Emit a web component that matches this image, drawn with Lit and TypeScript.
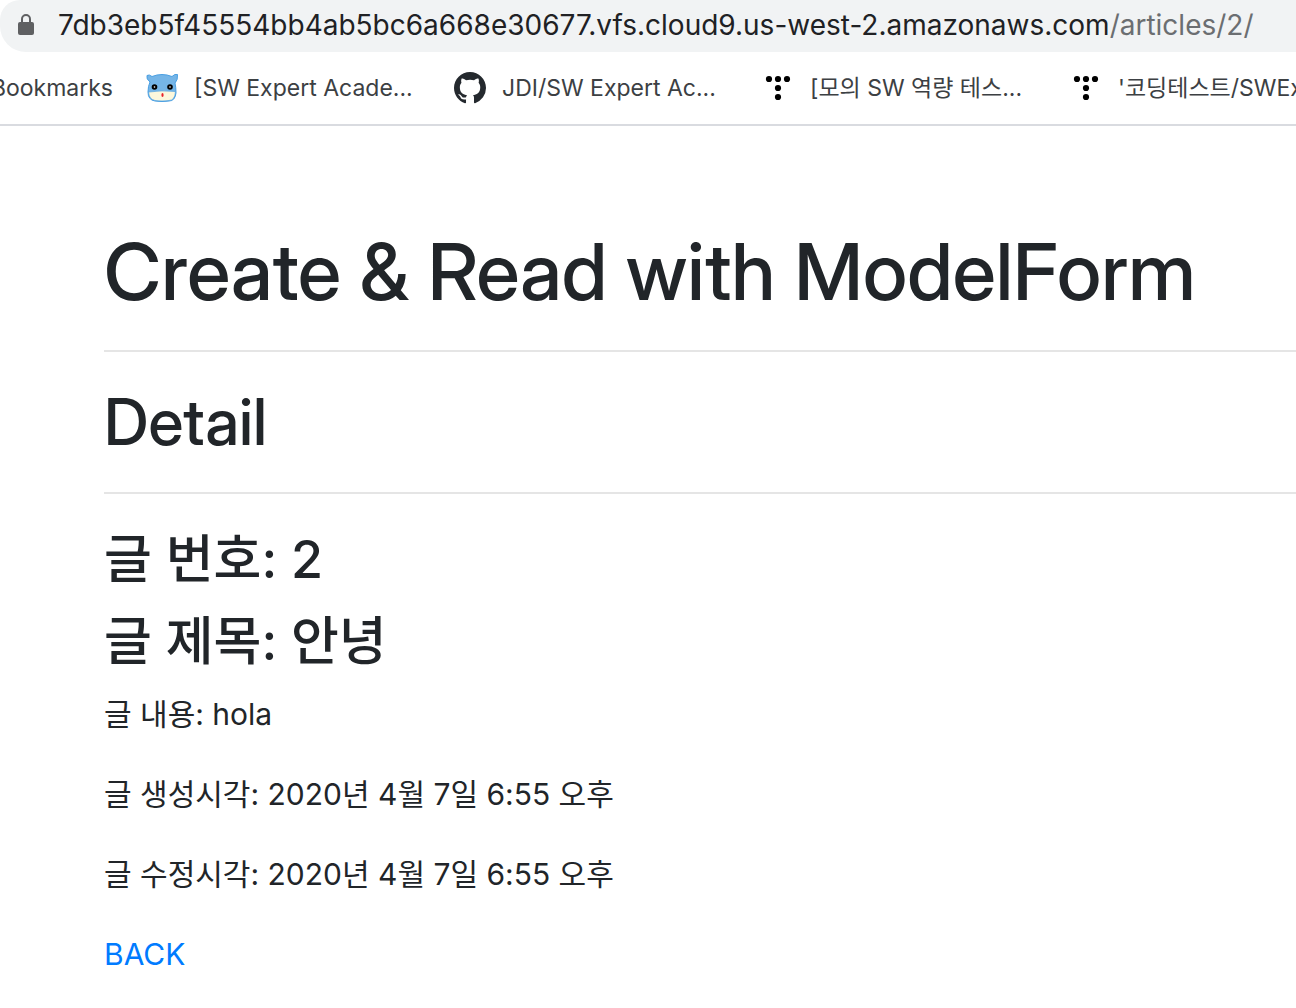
import { LitElement, html, css, svg } from "lit";
import { customElement } from "lit/decorators.js";

const cat = html`<svg class="icon" viewBox="0 0 32 32" aria-hidden="true">
  <path d="M1 3.5Q3 2 6 4.5Q16 .5 26 4.5Q29 1.5 31.5 2.5Q32 8 29 11Q30 15 30 21Q29 29 23 29Q16 30 9 29Q2 28 2 20Q2 14 4 10Q0 7 1 3.5Z" fill="#75b5e7" stroke="#4a9fe2" stroke-width="1"/>
  <path d="M2.500 20Q16 18 29.500 19.500Q29 28.500 23 28.500Q16 29.500 9 28.500Q3 27.500 2.500 20Z" fill="#fdf8dc" stroke="#4a9fe2" stroke-width=".7"/>
  <circle cx="8.500" cy="15" r="2.800"/><circle cx="24" cy="15" r="2.800"/>
  <circle cx="8.500" cy="15" r=".8" fill="#fff"/><circle cx="24" cy="15" r=".8" fill="#fff"/>
  <ellipse cx="16.500" cy="23" rx="1.100" ry="2" fill="#e8222b"/>
</svg>`;
const github = html`<svg class="icon" viewBox="0 0 16 16" fill="#24292e" aria-hidden="true"><path d="M8 0C3.58 0 0 3.58 0 8c0 3.54 2.29 6.53 5.47 7.59.4.07.55-.17.55-.38 0-.19-.01-.82-.01-1.49-2.01.37-2.53-.49-2.69-.94-.09-.23-.48-.94-.82-1.13-.28-.15-.68-.52-.01-.53.63-.01 1.08.58 1.23.82.72 1.21 1.87.87 2.33.66.07-.52.28-.87.51-1.07-1.78-.2-3.64-.89-3.64-3.95 0-.87.31-1.59.82-2.15-.08-.2-.36-1.02.08-2.12 0 0 .67-.21 2.2.82.64-.18 1.32-.27 2-.27s1.36.09 2 .27c1.53-1.04 2.2-.82 2.2-.82.44 1.1.16 1.92.08 2.12.51.56.82 1.27.82 2.15 0 3.07-1.87 3.75-3.65 3.95.29.25.54.73.54 1.48 0 1.07-.01 1.93-.01 2.2 0 .21.15.46.55.38A8.01 8.01 0 0 0 16 8c0-4.42-3.58-8-8-8z"/></svg>`;
const dots = html`<svg class="icon" viewBox="0 0 32 32" aria-hidden="true">${[[7, 7], [16, 7], [25, 7], [16, 16], [16, 25]].map(([x, y]) => svg`<circle cx=${x} cy=${y} r="3.1"/>`)}</svg>`;

@customElement("app-root")
export class AppRoot extends LitElement {
  static styles = css`
    :host { display: block; overflow: hidden; background: #fff; color: #212529; font-family: Inter, "Noto Sans CJK KR", sans-serif; font-size: 30px; line-height: 48px; }
    .address { height: 52px; box-sizing: border-box; display: flex; align-items: center; gap: 22px; padding: 0 0 2px 16px; background: #f1f3f4; border-radius: 20px 0 0 26px; font-size: 28px; white-space: nowrap; color: #202124; }
    .lock { width: 20px; height: 24px; flex: none; }
    .path { color: #6b6e71; }
    .bookmarks { height: 74px; box-sizing: border-box; display: flex; align-items: center; border-bottom: 2px solid #d9dbe0; font-size: 23px; white-space: nowrap; overflow: hidden; }
    .bookmark { display: flex; align-items: center; gap: 16px; flex: none; width: 308px; color: #3c4043; text-decoration: none; }
    .first { width: 113px; margin-right: 33px; justify-content: flex-end; }
    .icon { width: 32px; height: 32px; flex: none; }
    main { padding: 98px 0 0 104px; }
    h1, h2, h3, p { margin: 0; font-weight: 500; }
    h1, h2 { font-family: "Inter Display", Inter, sans-serif; }
    h1 { font-size: 79px; line-height: 94px; white-space: nowrap; }
    h2 { font-size: 64px; line-height: 76px; }
    h3 { font-size: 52px; line-height: 68px; margin-bottom: 14px; }
    p { font-weight: 400; margin-bottom: 32px; }
    hr { border: 0; border-top: 2px solid #e5e5e5; margin: 32px 0; }
    .back { color: #007bff; text-decoration: none; }
  `;
  render() {
    return html`
      <header>
        <div class="address"><svg class="lock" viewBox="0 0 20 24" aria-hidden="true"><rect x="2" y="9" width="16" height="13" rx="2" fill="#5f6062"/><path d="M6 10V6a4 4 0 0 1 8 0v4" fill="none" stroke="#5f6062" stroke-width="2"/></svg><span>7db3eb5f45554bb4ab5bc6a668e30677.vfs.cloud9.us-west-2.amazonaws.com<span class="path">/articles/2/</span></span></div>
        <nav class="bookmarks">
          <a class="bookmark first" href="#"><span>Bookmarks</span></a>
          <a class="bookmark" href="#">${cat}<span>[SW Expert Acade...</span></a>
          <a class="bookmark" href="#">${github}<span>JDI/SW Expert Ac...</span></a>
          <a class="bookmark" href="#">${dots}<span>[모의 SW 역량 테스...</span></a>
          <a class="bookmark" href="#">${dots}<span>'코딩테스트/SWEx</span></a>
        </nav>
      </header>
      <main>
        <h1>Create &amp; Read with ModelForm</h1><hr>
        <h2>Detail</h2><hr>
        <h3>글 번호: 2</h3><h3>글 제목: 안녕</h3>
        <p>글 내용: hola</p><p>글 생성시각: 2020년 4월 7일 6:55 오후</p><p>글 수정시각: 2020년 4월 7일 6:55 오후</p>
        <a class="back" href="#">BACK</a>
      </main>`;
  }
}
